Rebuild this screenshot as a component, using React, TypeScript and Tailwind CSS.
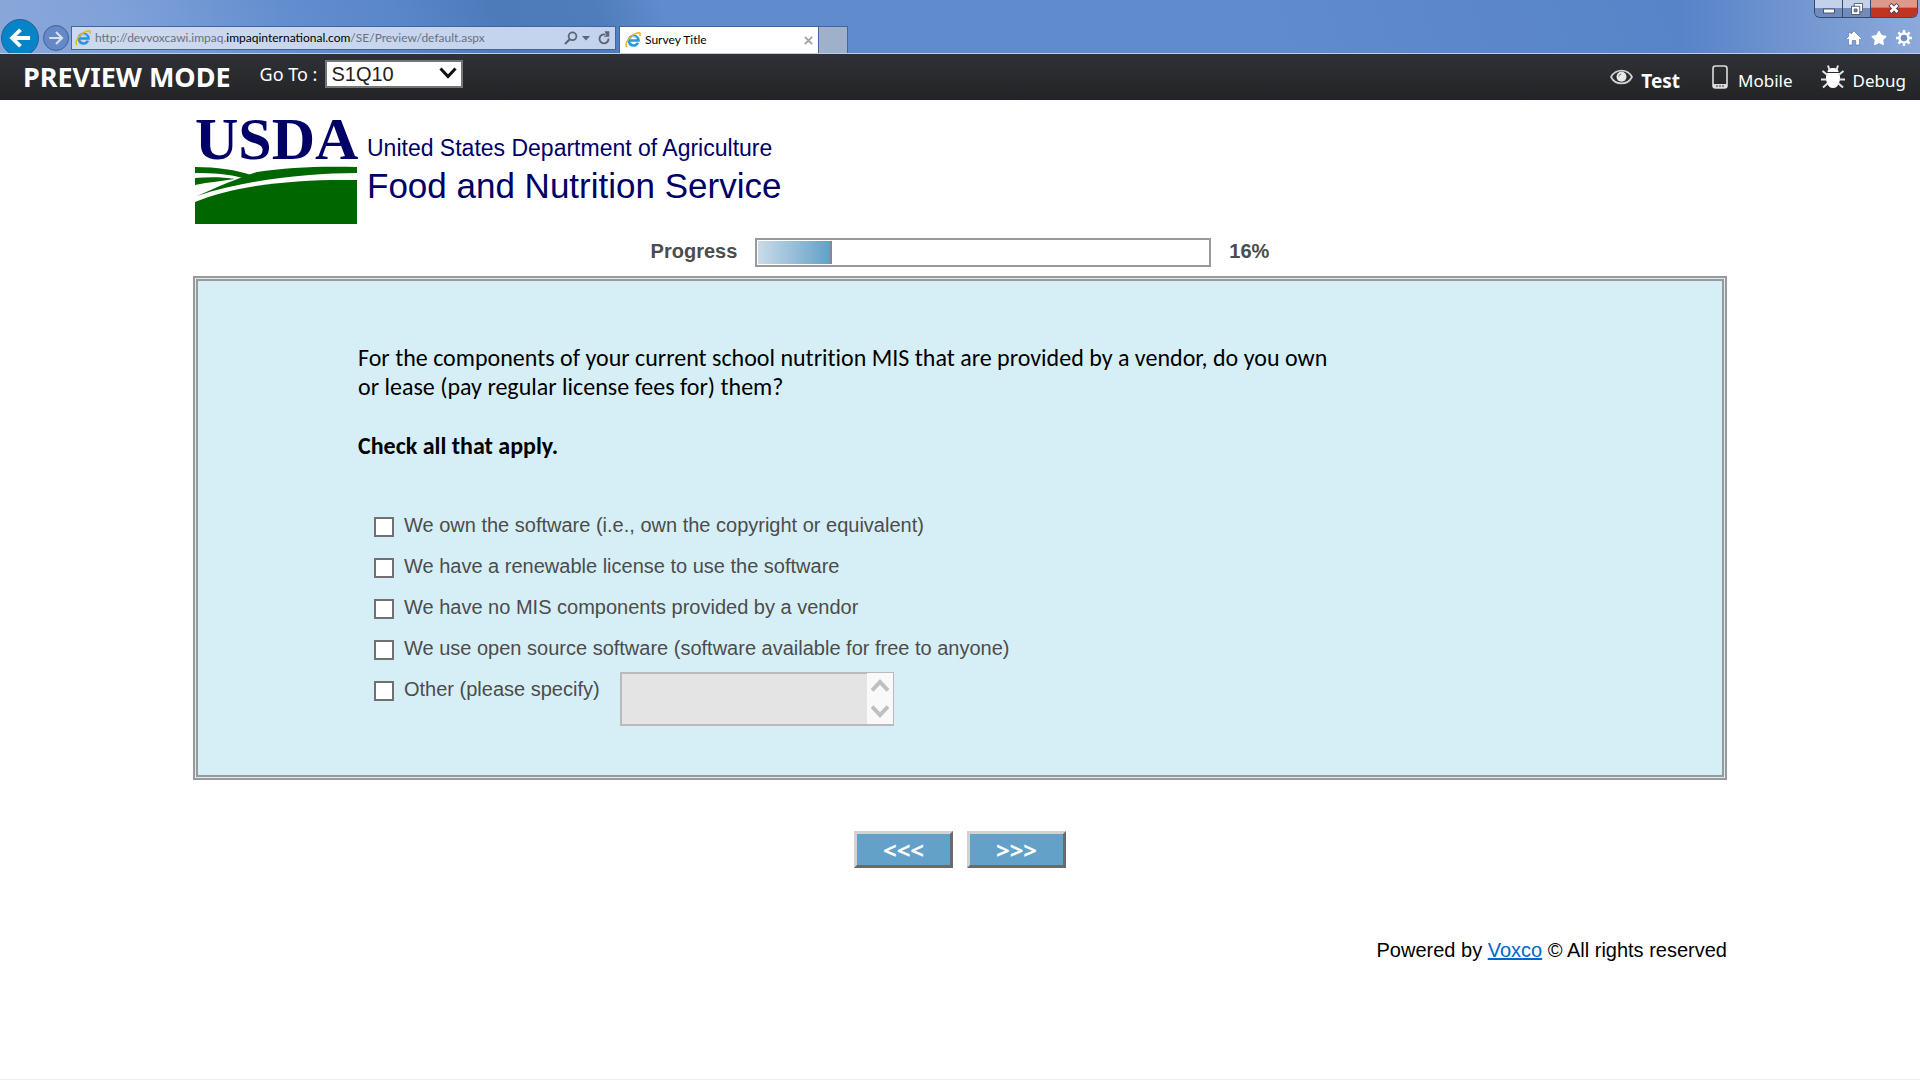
import { useState, type ReactNode } from "react"
import clsx from "clsx"
import { FaStar } from "react-icons/fa"

const options = [
  "We own the software (i.e., own the copyright or equivalent)",
  "We have a renewable license to use the software",
  "We have no MIS components provided by a vendor",
  "We use open source software (software available for free to anyone)",
  "Other (please specify)",
]

const progress = 16

const IeLogo = () => (
  <svg viewBox="0 0 16 16" className="size-4 flex-none">
    <path d="M13 10.800a4.900 4.900 0 1 1 .5-2.300H4.400" fill="none" stroke="#2c97d6" strokeWidth="2.600" />
    <path d="M4.400 7.300a4 4 0 0 1 7.600-.4" fill="none" stroke="#8fd3f4" strokeWidth="1" />
    <path d="M2.200 14.800C-.8 13.600 2.400 7 7.200 3.500 10.800.8 14.600 0 15.100 1.700c.2.700 0 1.400-.4 2.200" fill="none" stroke="#f2b50f" strokeWidth="1.500" />
  </svg>
)

const WindowButtons = () => (
  <div className="flex h-[18px] w-[104px] flex-none overflow-hidden rounded-b-md border border-t-0 border-[#34496f]">
    <button aria-label="Minimize" className="flex w-7 items-center justify-center border-r border-[#34496f] bg-linear-to-b from-[#c3d1e9] from-45% to-[#6f8cbc] to-50%">
      <svg viewBox="0 0 12 6" className="mt-1 w-3"><rect x=".5" y="1" width="11" height="4" fill="#fff" stroke="#4a5672" /></svg>
    </button>
    <button aria-label="Restore" className="flex w-7 items-center justify-center border-r border-[#34496f] bg-linear-to-b from-[#c3d1e9] from-45% to-[#6f8cbc] to-50%">
      <svg viewBox="0 0 13 13" className="size-3">
        <path d="M3.500.5h9v9h-9z" fill="#fff" stroke="#4a5672" />
        <path d="M.5 3.500h9v9h-9z" fill="#fff" stroke="#4a5672" />
        <path d="M3.500 6.500h3v3h-3z" fill="#6f8cbc" stroke="#4a5672" />
      </svg>
    </button>
    <button aria-label="Close" className="flex flex-1 items-center justify-center bg-linear-to-b from-[#dc9a8c] from-40% to-[#bf3521] to-50%">
      <svg viewBox="0 0 12 11" className="h-[11px] w-3">
        <path d="M2 1.500l8 8M10 1.500l-8 8" stroke="#4a4256" strokeWidth="4.500" />
        <path d="M2.500 2l7 7M9.500 2l-7 7" stroke="#fff" strokeWidth="2.600" />
      </svg>
    </button>
  </div>
)

const HomeIcon = () => (
  <svg viewBox="0 0 16 16" className="size-4">
    <path d="M8 1l7.500 7.500-1.200 1.200-.8-.7V15H9.700v-4.500H6.300V15H2.500V9l-.8.700L.5 8.500l2.200-2.200V2.500h2.300V4z" fill="#fff" stroke="#4c6ea6" strokeWidth=".6" />
  </svg>
)

const GearIcon = () => (
  <svg viewBox="0 0 16 16" className="size-4">
    <path d="M8 0v16M0 8h16M2.400 2.400l11.200 11.200M13.600 2.400L2.400 13.600" stroke="#fff" strokeWidth="2.400" />
    <circle cx="8" cy="8" r="4.500" fill="#6f90c6" stroke="#fff" strokeWidth="2.400" />
  </svg>
)

const BrowserBar = () => (
  <div className="flex h-[54px] justify-between overflow-hidden border-b border-[#b9cdee] bg-[#5f8bcd] font-[Lato,sans-serif]">
    <div className="flex flex-1 items-end bg-[linear-gradient(70deg,#8ba7d9_0%,#7fa1d9_8%,#628dce_18%,#5a87ca_24%,#4d7ab9_30%,#4f7cbb_36%,#608ccd_40%,#608ccd_75%,#5783c8_100%)]">
      <div className="flex w-[71px] flex-none items-center gap-1 pl-px">
        <button aria-label="Back" className="-mb-1 flex size-[38px] items-center justify-center rounded-full border border-[#2b5d95] bg-[#0585c7]">
          <svg viewBox="0 0 24 24" className="size-[22px]"><path d="M23 12H4M12.500 3l-9 9 9 9" fill="none" stroke="#fff" strokeWidth="4.200" /></svg>
        </button>
        <button aria-label="Forward" className="mt-1 flex size-[26px] items-center justify-center rounded-full border border-[#3d639f] bg-[#6489c4]">
          <svg viewBox="0 0 24 24" className="size-4"><path d="M2 12h19M12 3l9 9-9 9" fill="none" stroke="#d5e1f4" strokeWidth="3.200" /></svg>
        </button>
      </div>
      <div className="mb-[3px] flex h-6 w-[545px] items-center gap-1 border border-[#42659f] bg-linear-to-r from-[#cdd9ee] to-[#c3d3ee] px-[3px] text-[12px] text-[#697180]">
        <IeLogo />
        <span className="flex-1">http://devvoxcawi.impaq.<span className="text-black">impaqinternational.com</span>/SE/Preview/default.aspx</span>
        <button aria-label="Search">
          <svg viewBox="0 0 14 14" className="size-[14px]"><path d="M1 13l4.500-4.500" stroke="#5d6676" strokeWidth="2.200" /><circle cx="8.500" cy="5.300" r="3.900" fill="none" stroke="#5d6676" strokeWidth="1.800" /></svg>
        </button>
        <button aria-label="Show address list">
          <svg viewBox="0 0 8 5" className="w-2"><path d="M0 0h8L4 4.500z" fill="#5d6676" /></svg>
        </button>
        <button aria-label="Refresh" className="ml-1 mr-0.5">
          <svg viewBox="0 0 12 14" className="h-[14px] w-3"><path d="M10.500 7.500A4.500 4.500 0 1 1 7.500 3.600" fill="none" stroke="#5d6676" strokeWidth="1.900" /><path d="M6.500.2h4.800v5.600H5.600L8.500 4z" fill="#5d6676" /></svg>
        </button>
      </div>
      <div className="ml-[3px] flex h-[27px] w-[200px] items-center gap-1 border border-b-0 border-[#42659f] bg-white px-[5px] text-[12px]">
        <IeLogo />
        <span className="flex-1">Survey Title</span>
        <button aria-label="Close tab">
          <svg viewBox="0 0 10 10" className="size-[9px]"><path d="M1 1l8 8M9 1l-8 8" stroke="#a3a3a3" strokeWidth="2" /></svg>
        </button>
      </div>
      <button aria-label="New tab" className="h-[27px] w-[29px] border border-b-0 border-l-0 border-[#42659f] bg-[#9fb0cb]" />
    </div>
    <div className="flex w-[240px] flex-none flex-col items-end justify-between bg-linear-to-r from-[#5783c8] to-[#8da9da] pr-[2px] pb-[7px]">
      <WindowButtons />
      <div className="flex items-center gap-[9px] pr-[6px] text-white">
        <button aria-label="Home"><HomeIcon /></button>
        <button aria-label="Favorites"><FaStar className="size-4" /></button>
        <button aria-label="Tools"><GearIcon /></button>
      </div>
    </div>
  </div>
)

const EyeIcon = () => (
  <svg viewBox="0 0 23 16" className="mb-2 h-4 w-[23px]">
    <path d="M1 8C5.500-.6 17.500-.6 22 8 17.500 16.600 5.500 16.600 1 8z" fill="none" stroke="#d0d0d0" strokeWidth="1.700" />
    <circle cx="11.500" cy="7.800" r="5" fill="#e8e8e8" />
    <path d="M8.800 7.500a2.800 2.800 0 0 1 2.500-2.500" fill="none" stroke="#777" />
  </svg>
)

const PhoneIcon = () => (
  <svg viewBox="0 0 16 24" className="mr-0.5 mb-2 h-6 w-4">
    <rect x="1" y="1" width="14" height="22" rx="2.500" fill="none" stroke="#ddd" strokeWidth="1.600" />
    <path d="M1 19h14v2.500L14 23H2l-1-1.500z" fill="#ddd" />
    <path d="M4 21h2M7 21h2M10 21h2" stroke="#333" strokeWidth="1.200" />
  </svg>
)

const BugIcon = () => (
  <svg viewBox="0 0 24 24" className="mb-2 size-6">
    <path d="M6.500 7C6.500 4.500 9 3 12 3s5.500 1.500 5.500 4z" fill="#fff" />
    <path d="M6 8h12c1.500 3 1.500 7 0 10-1 3-3 5-6 5s-5-2-6-5c-1.500-3-1.500-7 0-10z" fill="#fff" />
    <path d="M8.500 5L7 .5M15.500 5L17 .5M7 10.500L1.500 6M17 10.500L22.500 6M6 14.500H0M18 14.500h6M7 18l-5 4.500M17 18l5 4.500" stroke="#e6e6e6" strokeWidth="2" />
  </svg>
)

const ToolLink = ({ label, bold, children }: { label: string, bold?: boolean, children: ReactNode }) => (
  <a href="#" className={clsx("flex items-center gap-2", bold ? "mr-1 text-[19px] font-bold" : "text-[17px]")}>
    {children}
    <span>{label}</span>
  </a>
)

const PreviewHeader = () => (
  <header className="flex h-[46px] items-center bg-linear-to-b from-[#303136] to-[#232426] pr-[14px] pl-[23px] font-['Noto_Sans',sans-serif] text-white">
    <h1 className="text-[27px] font-bold">PREVIEW MODE</h1>
    <div className="ml-[29px] flex items-center gap-2 pb-1.5">
      <label htmlFor="goto" className="text-lg">Go To :</label>
      <div className="relative">
        <select id="goto" className="block h-7 w-[138px] appearance-none border-2 border-[#76767a] bg-white pl-1 font-['Liberation_Sans',Arial,sans-serif] text-xl leading-6 text-[#222]">
          <option>S1Q10</option>
        </select>
        <svg viewBox="0 0 18 12" className="pointer-events-none absolute top-[7px] right-1.5 h-3 w-[18px]"><path d="M1.500 1.500L9 9.500l7.500-8" fill="none" stroke="#111" strokeWidth="3" /></svg>
      </div>
    </div>
    <nav className="ml-auto flex items-center gap-7 pt-[7px]">
      <ToolLink label="Test" bold><EyeIcon /></ToolLink>
      <ToolLink label="Mobile"><PhoneIcon /></ToolLink>
      <ToolLink label="Debug"><BugIcon /></ToolLink>
    </nav>
  </header>
)

const UsdaLogo = () => (
  <div className="flex gap-2.5 pt-3 pl-0.5 text-[#000066]">
    <div className="w-[162px]">
      <div className="font-['Liberation_Serif',serif] text-[60px] leading-[54px] font-bold">USDA</div>
      <svg viewBox="0 0 162 58" className="block h-[58px] w-[162px]">
        <rect width="162" height="58" fill="#fff" />
        <path d="M0 1c22 0 42 3 56 8l-8 3C34 8 18 7 0 7z" fill="#006600" />
        <path d="M0 12c14-1 28-1 40 1C28 15 14 16 0 19z" fill="#006600" />
        <path d="M2 30C20 22 46 11 62 6 92 1 128 0 162 1v6C112 7 50 14 2 30z" fill="#006600" />
        <path d="M0 36C40 19 100 13 162 14v44H0z" fill="#006600" />
      </svg>
    </div>
    <div className="pt-5">
      <p className="text-[23px] leading-8">United States Department of Agriculture</p>
      <p className="text-[35px] leading-[44px]">Food and Nutrition Service</p>
    </div>
  </div>
)

const ProgressBar = () => (
  <div className="mt-[14px] flex items-start justify-center gap-[18px] leading-[27px] font-bold text-[#4c4c4c]">
    <span id="progress-label">Progress</span>
    <div role="progressbar" aria-labelledby="progress-label" aria-valuenow={progress} className="h-[29px] w-[456px] border-2 border-[#999] bg-white p-px">
      <div className="box-content h-full border-r-2 border-[#888] bg-linear-to-r from-[#c8dce9] to-[#62a0c8]" style={{ width: `${progress}%` }} />
    </div>
    <span>{progress}%</span>
  </div>
)

const SpecifyBox = () => (
  <div className="relative mt-1 ml-5">
    <textarea aria-label="Other, please specify" disabled className="block h-[54px] w-[274px] resize-none border-2 border-[#bababa] bg-[#e4e4e4]" />
    <div className="absolute top-px right-px bottom-0.5 flex w-[26px] flex-col items-center justify-between bg-[#f9f9f9] py-1.5 text-[#bfbfbf]">
      <svg viewBox="0 0 18 14" className="h-[14px] w-[18px]"><path d="M1 11.500L9 3l8 8.500" fill="none" stroke="currentColor" strokeWidth="4" /></svg>
      <svg viewBox="0 0 18 14" className="h-[14px] w-[18px]"><path d="M1 2.500L9 11l8-8.500" fill="none" stroke="currentColor" strokeWidth="4" /></svg>
    </div>
  </div>
)

const NavButton = ({ label, name }: { label: string, name: string }) => (
  <button aria-label={name} className="h-[37px] w-[99px] border-3 border-t-[#d2d2d2] border-r-[#6a6a6a] border-b-[#6a6a6a] border-l-[#d2d2d2] bg-[#64a1c8] font-['Noto_Sans',sans-serif] text-2xl leading-7 font-bold text-white">
    {label}
  </button>
)

const App = () => {
  const [checked, setChecked] = useState<string[]>([])

  const toggle = (option: string) => {
    setChecked(old => old.includes(option) ? old.filter(o => o !== option) : [...old, option])
  }

  return (
    <div className="min-h-screen border-b border-[#eee] bg-white font-['Liberation_Sans',Arial,sans-serif] text-xl leading-6 text-black">
      <BrowserBar />
      <PreviewHeader />
      <main className="mx-auto w-4/5 px-px">
        <UsdaLogo />
        <ProgressBar />
        <section className="mt-[9px] border-5 border-double border-[#999] bg-[#d6eff6] pt-[62px] pr-5 pb-[49px] pl-[160px]">
          <div className="max-w-[985px] font-[Carlito,Calibri,Lato,sans-serif] text-2xl leading-[29px] [font-variant-ligatures:none]">
            <p>For the components of your current school nutrition MIS that are provided by a vendor, do you own or lease (pay regular license fees for) them?</p>
            <p className="mt-[30px] font-bold">Check all that apply.</p>
          </div>
          <ul className="mt-11 pl-4 text-[#4c4c4c]">
            {options.map((option, i) => (
              <li key={option} className="flex items-start">
                <label className="flex h-[41px] items-center gap-2.5">
                  <input
                    type="checkbox"
                    className="mt-1 size-5 appearance-none border-2 border-[#707070] bg-white checked:bg-[#64a1c8]"
                    checked={checked.includes(option)}
                    onChange={() => toggle(option)}
                  />
                  {option}
                </label>
                {i === options.length - 1 && <SpecifyBox />}
              </li>
            ))}
          </ul>
        </section>
        <div className="mt-[51px] flex justify-center gap-[14px]">
          <NavButton label="<<<" name="Previous" />
          <NavButton label=">>>" name="Next" />
        </div>
        <footer className="mt-[70px] text-right">
          Powered by <a href="#" className="text-[#0066cc] underline">Voxco</a> © All rights reserved
        </footer>
      </main>
    </div>
  )
}

export default App
